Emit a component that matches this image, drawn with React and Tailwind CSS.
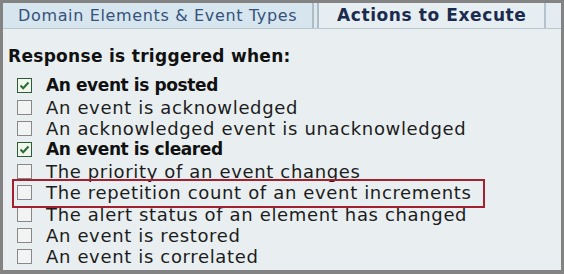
import React from 'react';

const EVENTS = [
  { label: 'An event is posted', checked: true },
  { label: 'An event is acknowledged' },
  { label: 'An acknowledged event is unacknowledged' },
  { label: 'An event is cleared', checked: true },
  { label: 'The priority of an event changes' },
  { label: 'The repetition count of an event increments', highlight: true },
  { label: 'The alert status of an element has changed' },
  { label: 'An event is restored' },
  { label: 'An event is correlated' },
];

const Checkbox = ({ checked }) => (
  <span
    className={`flex h-[15px] w-[15px] shrink-0 items-center justify-center border ${
      checked ? 'border-[#2f5a35] bg-[#eef6ee]' : 'border-[#888] bg-[#f2f4f4]'
    }`}
  >
    {checked && (
      <svg width="11" height="9" viewBox="0 0 11 9">
        <path d="M1.5 4.5 L4.2 7.2 L9.5 1.5" fill="none" stroke="#2d6a2f" strokeWidth="2" />
      </svg>
    )}
  </span>
);

export default function App() {
  return (
    <div
      className="h-[274px] w-[564px] overflow-hidden bg-[#838383] pb-[4px] pl-[3px] pr-[3px] pt-[3px]"
      style={{ fontFamily: '"DejaVu Sans", Verdana, sans-serif' }}
    >
      <div className="flex h-full flex-col bg-[#e9eff0]">
        {/* tab strip */}
        <div className="flex h-[26px] border-b border-[#b9c6cc] bg-[#e9eff0]">
          <div className="flex w-[311px] items-center border-r-2 border-[#aebdc6] bg-[#d7e5ef] pl-[15px] text-[16px] tracking-[0.65px] text-[#34527a]">
            Domain Elements &amp; Event Types
          </div>
          <div className="w-[3px] bg-[#dfe8ee]" />
          <div className="flex w-[227px] items-center border-l-2 border-[#aebdc6] bg-[#e6eef2] pl-[18px] text-[17px] font-bold tracking-[0.6px] text-[#1b2b4e]">
            Actions to Execute
          </div>
          <div className="flex-1 border-l-2 border-[#b3c2cc] bg-[#e4ecf1]" />
        </div>

        <div className="pl-[5px] pt-[17px] text-[17px] font-bold leading-[20px] tracking-[0.3px] text-[#111]">
          Response is triggered when:
        </div>

        <div className="relative mt-[9px] flex flex-col">
          {EVENTS.map((ev) => (
            <div key={ev.label} className="flex h-[21.4px] items-center pl-[14px]">
              <Checkbox checked={ev.checked} />
              <span
                className={`ml-[14px] whitespace-nowrap leading-[21px] ${
                  ev.checked
                    ? 'text-[17px] font-bold tracking-[-0.4px] text-[#111]'
                    : 'text-[18px] tracking-[0.65px] text-[#1c1c1c]'
                }`}
              >
                {ev.label}
              </span>
            </div>
          ))}
          <div className="pointer-events-none absolute left-[9px] top-[104px] h-[29px] w-[473px] border-2 border-[#a3202e]" />
        </div>
      </div>
    </div>
  );
}
